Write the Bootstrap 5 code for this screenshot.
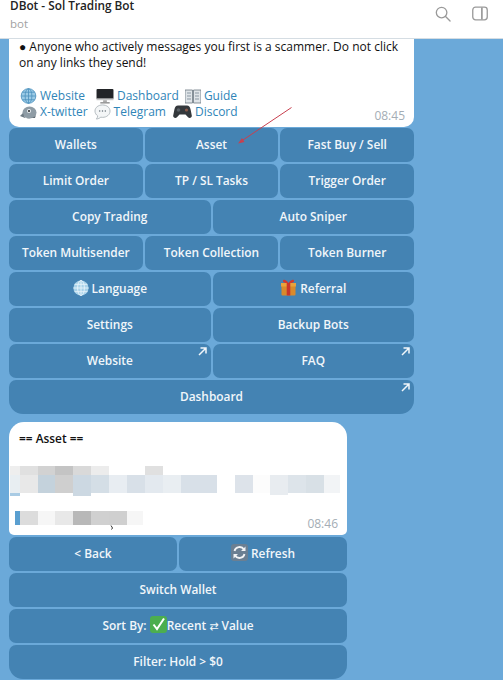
<!DOCTYPE html>
<html lang="en">
<head>
<meta charset="utf-8">
<title>DBot - Sol Trading Bot</title>
<link rel="stylesheet" href="https://cdn.jsdelivr.net/npm/bootstrap@5.3.0/dist/css/bootstrap.min.css">
<style>
html,body{height:680px;overflow:hidden}
body{background:#6ba9d9;font-family:"Open Sans","Liberation Sans",sans-serif;color:#111;position:relative}
.tg-head{height:39px;background:#fff;border-bottom:1px solid #d5dde3;padding:0 10px;position:relative;z-index:2;overflow:hidden}
.tg-title{font-size:11.8px;font-weight:600;line-height:16px;margin-top:-3px;color:#222}
.tg-sub{font-size:11.5px;line-height:16px;color:#a2a2a2;margin-top:3px}
.tg-tools{gap:21px;padding-top:6px;margin-right:5px}
.tg-bubble{background:#fff;position:relative;font-size:12px}
.bub-a{width:405px;margin:-1px 0 0 9px;height:89px;padding:1px 10px 0;border-radius:0 0 10px 10px;line-height:16px}
.bub-b{width:338px;margin:8px 0 0 9px;height:113px;padding:8px 0 0 1px;border-radius:15px 15px 5px 5px;line-height:16px}
.bub-b b{font-weight:600;margin-left:9px;display:block;font-size:11.9px}
.bub-b svg{display:block;margin-top:20px}
.gap-line{height:17px}
.tg-link{color:#2f85b8;text-decoration:none}
.link-line{height:16px;white-space:nowrap;display:flex;align-items:center}
.link-line svg{margin:0 3px 0 1px;flex:none}
.lk-m1{margin-left:11px!important}
.lk-m2{margin-left:6px!important}
.lk-m3{margin-left:6px!important}
.lk-m4{margin-left:7px!important}
.stamp{position:absolute;right:9px;bottom:3px;font-size:12px;color:#a4adb5;line-height:16px}
.kb{margin:1px 0 0 9px;gap:2px}
.kb-w1{width:405px}
.kb-w2{width:338px;margin-top:2px}
.kb-row{gap:2px}
.kb-btn{flex:1 1 0;min-width:0;height:34px;padding:0 0 2px;border:0;border-radius:7px;background:#4483b3;color:#f1f6fa;font-size:11.9px;font-weight:600;line-height:32px;position:relative;white-space:nowrap}
.kb-btn:hover,.kb-btn:active{background:#4483b3;color:#f1f6fa}
.kb-btn svg{vertical-align:-3px}
.kb-last .kb-btn{border-radius:7px 7px 14px 14px}
.kb-out{position:absolute;top:3px;right:4px;width:9px;height:9px}
.swap{font-family:"DejaVu Sans",sans-serif;font-weight:400;font-size:11px}
.mark-arrow{position:absolute;left:0;top:0;z-index:3;pointer-events:none}
</style>
</head>
<body>
<header class="tg-head d-flex justify-content-between">
  <div>
    <div class="tg-title">DBot - Sol Trading Bot</div>
    <div class="tg-sub">bot</div>
  </div>
  <div class="tg-tools d-flex align-items-start">
    <svg width="16" height="16" viewBox="0 0 17 17" fill="none" stroke="#9a9a9a" stroke-width="1.4"><circle cx="7" cy="7" r="5.6"/><path d="M11.2 11.2 16 16" stroke-linecap="round"/></svg>
    <svg width="16" height="15" viewBox="0 0 17 15" fill="none" stroke="#9a9a9a" stroke-width="1.4"><rect x=".8" y=".8" width="15.4" height="13.4" rx="3"/><path d="M10.5 1v13" stroke-width="1.8"/></svg>
  </div>
</header>

<section class="tg-bubble bub-a">
  <div>● Anyone who actively messages you first is a scammer. Do not click on any links they send!</div>
  <div class="gap-line"></div>
  <div class="link-line">
    <svg width="17" height="16" viewBox="0 0 17 17"><circle cx="8.5" cy="8.5" r="7.8" fill="#9ccbe6"/><g fill="none" stroke="#4f93bf" stroke-width=".9"><circle cx="8.5" cy="8.5" r="7.8"/><ellipse cx="8.5" cy="8.5" rx="3.6" ry="7.8"/><path d="M8.5.7v15.6M.7 8.5h15.6M2 4.5h13M2 12.5h13"/></g></svg><a class="tg-link" href="#">Website</a>
    <svg class="lk-m1" width="18" height="16" viewBox="0 0 18 17"><rect x="0" y="1" width="18" height="11" rx="1" fill="#232528"/><rect x="0" y="11" width="18" height="2" fill="#c9c9c9"/><rect x="7" y="13" width="4" height="2" fill="#aaa"/><rect x="4" y="15" width="10" height="1.5" fill="#8f8f8f"/></svg><a class="tg-link" href="#">Dashboard</a>
    <svg class="lk-m2" width="16" height="16" viewBox="0 0 16 16"><path d="M0 2h7.5v13H0zM8.500 2H16v13H8.500z" fill="#dfe4e8" stroke="#6a7680" stroke-width=".8"/><path d="M2 5h4M2 8h4M2 11h4M10 5h4M10 8h4M10 11h4" stroke="#8b98a3"/></svg><a class="tg-link" href="#">Guide</a>
  </div>
  <div class="link-line">
    <svg width="17" height="16" viewBox="0 0 17 16"><ellipse cx="9.500" cy="8.500" rx="7" ry="6" fill="#8f9ca5"/><path d="M3 9 0 12l5 2z" fill="#6f7c85"/><path d="M4 13c3 2 9 2 12-2l-1 3H5z" fill="#5e6a72"/><circle cx="9" cy="7" r="2" fill="#e9eef1"/><circle cx="9" cy="7" r="1" fill="#222"/></svg><a class="tg-link" href="#">X-twitter</a>
    <svg class="lk-m3" width="17" height="16" viewBox="0 0 17 17"><path d="M8.500 1C4 1 .5 3.800.5 7.500c0 2.200 1.200 4 3 5.200-.2 1.200-.8 2.500-1.500 3.300 1.800-.1 3.600-1 4.700-2 .6.100 1.200.2 1.800.2 4.500 0 8-2.900 8-6.700S13 1 8.500 1z" fill="#f4f6f7" stroke="#a9b1b6" stroke-width=".9"/><g fill="#66717a"><circle cx="5.500" cy="7.500" r=".8"/><circle cx="8.500" cy="7.500" r=".8"/><circle cx="11.500" cy="7.500" r=".8"/></g></svg><a class="tg-link" href="#">Telegram</a>
    <svg class="lk-m4" width="19" height="16" viewBox="0 0 19 16"><path d="M5 1.500h9c2 0 3 1.500 3.600 4l1.200 6c.3 2.500-2.500 3.500-4 1.500L12.500 10.500h-6L4.200 13c-1.500 2-4.300 1-4-1.500l1.200-6c.6-2.500 1.600-4 3.600-4z" fill="#34383c"/><circle cx="5.500" cy="6" r="1.800" fill="#5a6167"/><circle cx="13.500" cy="6" r="1.600" fill="#8a5a4a"/></svg><a class="tg-link" href="#">Discord</a>
  </div>
  <span class="stamp">08:45</span>
</section>

<nav class="kb kb-w1 d-flex flex-column">
  <div class="kb-row d-flex"><button class="btn kb-btn">Wallets</button><button class="btn kb-btn">Asset</button><button class="btn kb-btn">Fast Buy / Sell</button></div>
  <div class="kb-row d-flex"><button class="btn kb-btn">Limit Order</button><button class="btn kb-btn">TP / SL Tasks</button><button class="btn kb-btn">Trigger Order</button></div>
  <div class="kb-row d-flex"><button class="btn kb-btn">Copy Trading</button><button class="btn kb-btn">Auto Sniper</button></div>
  <div class="kb-row d-flex"><button class="btn kb-btn">Token Multisender</button><button class="btn kb-btn">Token Collection</button><button class="btn kb-btn">Token Burner</button></div>
  <div class="kb-row d-flex">
    <button class="btn kb-btn"><svg width="16" height="16" viewBox="0 0 16 16"><circle cx="8" cy="8" r="7.600" fill="#a9d3ea"/><g fill="none" stroke="#e8f4fa" stroke-width=".9"><ellipse cx="8" cy="8" rx="3.400" ry="7.600"/><path d="M8 .4v15.200M.4 8h15.200M1.500 4.300h13M1.500 11.700h13"/></g></svg> Language</button>
    <button class="btn kb-btn"><svg width="17" height="17" viewBox="0 0 17 17"><rect x="1.500" y="5" width="14" height="11.500" rx="1" fill="#d98a2b"/><rect x="1" y="4" width="15" height="3.500" fill="#e9a23b"/><rect x="6.700" y="4" width="3.600" height="12.500" fill="#c9352b"/><path d="M8.500 4C6 .5 3 0 3 2s3 2 5.500 2zM8.500 4C11 .5 14 0 14 2s-3 2-5.500 2z" fill="#d2382e"/></svg> Referral</button>
  </div>
  <div class="kb-row d-flex"><button class="btn kb-btn">Settings</button><button class="btn kb-btn">Backup Bots</button></div>
  <div class="kb-row d-flex">
    <button class="btn kb-btn">Website<svg class="kb-out" viewBox="0 0 9 9" fill="none" stroke="#f1f6fa" stroke-width="1.500"><path d="M1 8 7.500 1.500M2.500 1h5.500v5.500"/></svg></button>
    <button class="btn kb-btn">FAQ<svg class="kb-out" viewBox="0 0 9 9" fill="none" stroke="#f1f6fa" stroke-width="1.500"><path d="M1 8 7.500 1.500M2.500 1h5.500v5.500"/></svg></button>
  </div>
  <div class="kb-row kb-last d-flex"><button class="btn kb-btn">Dashboard<svg class="kb-out" viewBox="0 0 9 9" fill="none" stroke="#f1f6fa" stroke-width="1.500"><path d="M1 8 7.500 1.500M2.500 1h5.500v5.500"/></svg></button></div>
</nav>

<section class="tg-bubble bub-b">
  <b>== Asset ==</b>
  <svg width="337" height="70" viewBox="0 0 337 70">
    <g transform="translate(-10,-466)">
      <rect x="10" y="466" width="10" height="9" fill="#eeeeee"/><rect x="20" y="466" width="18" height="9" fill="#e0e0e0"/><rect x="38" y="466" width="17" height="9" fill="#d2d2d2"/><rect x="55" y="466" width="18" height="9" fill="#c4c4c4"/><rect x="73" y="466" width="18" height="9" fill="#d9d9d9"/><rect x="91" y="466" width="18" height="9" fill="#ececec"/><rect x="145" y="466" width="18" height="9" fill="#e0e0e0"/>
      <rect x="10" y="475" width="10" height="18" fill="#e8eef2"/><rect x="20" y="475" width="18" height="18" fill="#e8e8e8"/><rect x="38" y="475" width="17" height="18" fill="#c4d2dc"/><rect x="55" y="475" width="18" height="18" fill="#cfcfcf"/><rect x="73" y="475" width="18" height="21" fill="#ccd8e2"/><rect x="91" y="475" width="18" height="18" fill="#d4dee6"/><rect x="109" y="475" width="18" height="18" fill="#e8edf2"/><rect x="127" y="475" width="18" height="18" fill="#d8e0e8"/><rect x="145" y="475" width="18" height="18" fill="#e3e9ef"/><rect x="163" y="475" width="18" height="18" fill="#e9eef2"/><rect x="181" y="475" width="36" height="18" fill="#d8e0e8"/><rect x="235" y="475" width="18" height="18" fill="#dde3ea"/><rect x="253" y="475" width="17" height="18" fill="#fcfcfc"/><rect x="270" y="475" width="18" height="20" fill="#e8ecf0"/><rect x="288" y="475" width="18" height="18" fill="#dde4ea"/><rect x="306" y="475" width="18" height="18" fill="#d8e0e6"/><rect x="324" y="475" width="16" height="18" fill="#f2f4f6"/>
      <rect x="10" y="493" width="10" height="3" fill="#a9cbe4"/>
      <rect x="15" y="511" width="5" height="14" fill="#5a9fd0"/><rect x="20" y="511" width="18" height="14" fill="#dcdcdc"/><rect x="38" y="511" width="17" height="14" fill="#f6f6f6"/><rect x="55" y="511" width="18" height="14" fill="#e8e8e8"/><rect x="73" y="511" width="18" height="14" fill="#b8b8b8"/><rect x="91" y="511" width="18" height="14" fill="#d0d0d0"/><rect x="109" y="511" width="18" height="14" fill="#cfcfcf"/><rect x="127" y="511" width="16" height="14" fill="#f6f6f6"/>
      <path d="M111 525.500l1.500 2.500-1 1.500" fill="none" stroke="#333" stroke-width="1"/>
    </g>
  </svg>
  <span class="stamp">08:46</span>
</section>

<nav class="kb kb-w2 d-flex flex-column">
  <div class="kb-row d-flex">
    <button class="btn kb-btn">&lt; Back</button>
    <button class="btn kb-btn"><svg width="17" height="17" viewBox="0 0 17 17"><rect width="17" height="17" rx="3" fill="#6b7f92"/><path d="M3.500 7a5.200 5.200 0 0 1 9.500-1.500M13.500 10a5.200 5.200 0 0 1-9.500 1.500" fill="none" stroke="#f2f4f6" stroke-width="1.800"/><path d="M14.500 2.500v4.500H10zM2.500 14.500V10H7z" fill="#f2f4f6"/></svg> Refresh</button>
  </div>
  <div class="kb-row d-flex"><button class="btn kb-btn">Switch Wallet</button></div>
  <div class="kb-row d-flex"><button class="btn kb-btn">Sort By: <svg width="17" height="17" viewBox="0 0 17 17"><rect width="17" height="17" rx="3" fill="#4cae4f"/><path d="M3.500 8.500 7 13 14 2.500" fill="none" stroke="#fff" stroke-width="2"/></svg>Recent <span class="swap">⇄</span> Value</button></div>
  <div class="kb-row kb-last d-flex"><button class="btn kb-btn">Filter: Hold &gt; $0</button></div>
</nav>

<svg class="mark-arrow" width="503" height="680" viewBox="0 0 503 680"><path d="M291.500 107.500 240 142" fill="none" stroke="#c8404f" stroke-width="1"/><path d="M238 143.500l6.500-1.500-2.500-4z" fill="#c8404f"/></svg>

<script src="https://cdn.jsdelivr.net/npm/bootstrap@5.3.0/dist/js/bootstrap.bundle.min.js"></script>
</body>
</html>
